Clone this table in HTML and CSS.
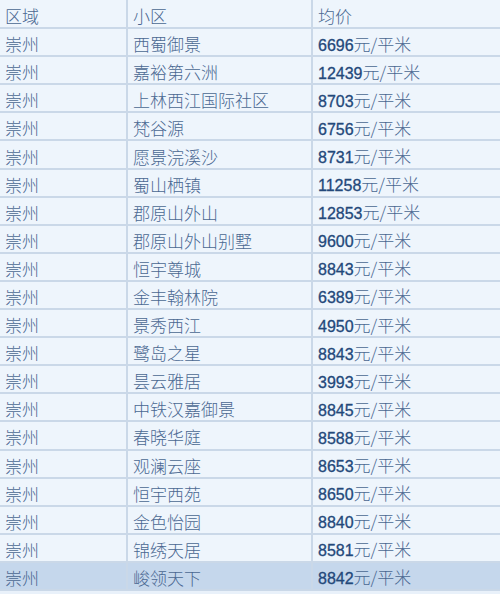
FILE: index.html
```html
<!DOCTYPE html>
<html lang="zh-CN">
<head>
<meta charset="utf-8">
<title>崇州 小区均价</title>
<link rel="stylesheet" href="styles.css">
</head>
<body>
<table class="price-table">
  <colgroup>
    <col class="c-area">
    <col class="c-name">
    <col class="c-price">
  </colgroup>
  <thead>
    <tr><th>区域</th><th>小区</th><th>均价</th></tr>
  </thead>
  <tbody>
    <tr><td>崇州</td><td>西蜀御景</td><td><span class="num">6696</span>元/平米</td></tr>
    <tr><td>崇州</td><td>嘉裕第六洲</td><td><span class="num">12439</span>元/平米</td></tr>
    <tr><td>崇州</td><td>上林西江国际社区</td><td><span class="num">8703</span>元/平米</td></tr>
    <tr><td>崇州</td><td>梵谷源</td><td><span class="num">6756</span>元/平米</td></tr>
    <tr><td>崇州</td><td>愿景浣溪沙</td><td><span class="num">8731</span>元/平米</td></tr>
    <tr><td>崇州</td><td>蜀山栖镇</td><td><span class="num">11258</span>元/平米</td></tr>
    <tr><td>崇州</td><td>郡原山外山</td><td><span class="num">12853</span>元/平米</td></tr>
    <tr><td>崇州</td><td>郡原山外山别墅</td><td><span class="num">9600</span>元/平米</td></tr>
    <tr><td>崇州</td><td>恒宇尊城</td><td><span class="num">8843</span>元/平米</td></tr>
    <tr><td>崇州</td><td>金丰翰林院</td><td><span class="num">6389</span>元/平米</td></tr>
    <tr><td>崇州</td><td>景秀西江</td><td><span class="num">4950</span>元/平米</td></tr>
    <tr><td>崇州</td><td>鹭岛之星</td><td><span class="num">8843</span>元/平米</td></tr>
    <tr><td>崇州</td><td>昙云雅居</td><td><span class="num">3993</span>元/平米</td></tr>
    <tr><td>崇州</td><td>中铁汉嘉御景</td><td><span class="num">8845</span>元/平米</td></tr>
    <tr><td>崇州</td><td>春晓华庭</td><td><span class="num">8588</span>元/平米</td></tr>
    <tr><td>崇州</td><td>观澜云座</td><td><span class="num">8653</span>元/平米</td></tr>
    <tr><td>崇州</td><td>恒宇西苑</td><td><span class="num">8650</span>元/平米</td></tr>
    <tr><td>崇州</td><td>金色怡园</td><td><span class="num">8840</span>元/平米</td></tr>
    <tr><td>崇州</td><td>锦绣天居</td><td><span class="num">8581</span>元/平米</td></tr>
    <tr class="is-selected"><td>崇州</td><td>峻领天下</td><td><span class="num">8842</span>元/平米</td></tr>
  </tbody>
</table>
</body>
</html>
```

FILE: styles.css
```css
html, body {
  margin: 0;
  padding: 0;
  background: #e9f1fa;
}

.price-table {
  width: 500px;
  border-collapse: collapse;
  table-layout: fixed;
  background: #eef5fc;
  font-family: "Noto Sans CJK SC", "Liberation Sans", sans-serif;
  font-size: 17px;
  color: #4a6892;
}

.c-area { width: 127px; }
.c-name { width: 185px; }
.c-price { width: 188px; }

.price-table tr {
  height: 28.1px;
}

.price-table th,
.price-table td {
  height: 26.1px;
  box-sizing: border-box;
  padding: 4px 0 0 5px;
  border: none;
  border-bottom: 2px solid #cad8e8;
  text-align: left;
  font-weight: 300;
  line-height: 18px;
  vertical-align: middle;
  white-space: nowrap;
  overflow: hidden;
}

.price-table th + th,
.price-table td + td {
  border-left: 2px solid #cad8e8;
}

.num {
  font-family: "Liberation Sans", "DejaVu Sans", sans-serif;
  font-size: 16px;
  line-height: 1;
  color: #23487a;
  -webkit-text-stroke: 0.3px #23487a;
}

.price-table tr.is-selected td {
  background: #c5d7ec;
}
```
